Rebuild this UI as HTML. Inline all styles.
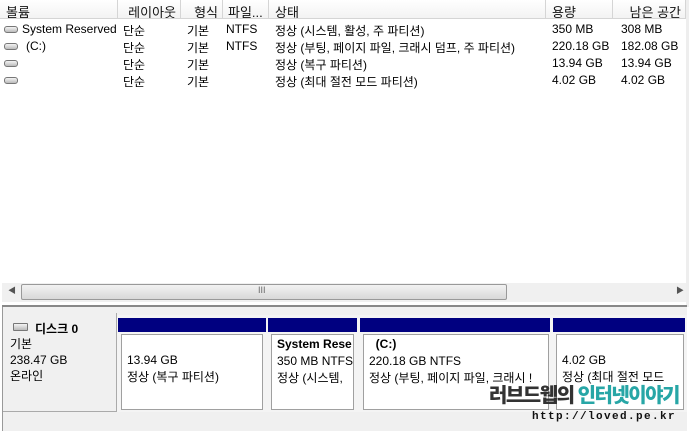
<!DOCTYPE html>
<html><head><meta charset="utf-8"><style>
*{margin:0;padding:0;box-sizing:border-box}
body{width:689px;height:431px;overflow:hidden;background:#fff;font-family:"Liberation Sans","Noto Sans CJK KR",sans-serif;font-size:12px;color:#000;position:relative}
.a{position:absolute;white-space:nowrap}
.hd{position:absolute;top:0;height:19px;border-right:1px solid #d5d5d5;border-bottom:1px solid #d5d5d5;background:linear-gradient(#fff,#f3f3f3);padding:2px 4px 0 6px;color:#111;font-size:13px;white-space:nowrap;overflow:hidden}
.ic{position:absolute;width:14px;height:7px;border:1px solid #777;border-radius:3px;background:linear-gradient(#f4f4f4,#bbb)}
.bar{position:absolute;top:318px;height:14px;background:#000080}
.box{position:absolute;top:334px;height:76px;background:#fff;border:1px solid #a0a0a0;padding:17px 0 0 5px;line-height:17px;overflow:hidden;white-space:nowrap}
</style></head><body>
<div class="hd" style="left:0;width:118px">볼륨</div>
<div class="hd" style="left:118px;width:63px;text-align:right">레이아웃</div>
<div class="hd" style="left:181px;width:42px;text-align:right">형식</div>
<div class="hd" style="left:223px;width:46px;padding-left:5px;padding-right:0">파일...</div>
<div class="hd" style="left:269px;width:277px">상태</div>
<div class="hd" style="left:546px;width:67px">용량</div>
<div class="hd" style="left:613px;width:73px;text-align:right">남은 공간</div>

<div class="ic" style="left:4px;top:26px"></div><div class="ic" style="left:4px;top:43px"></div><div class="ic" style="left:4px;top:60px"></div><div class="ic" style="left:4px;top:77px"></div>
<div class="a" style="left:22px;top:22px">System Reserved</div>
<div class="a" style="left:26px;top:39px">(C:)</div>
<div class="a" style="left:123px;top:22px">단순</div><div class="a" style="left:123px;top:39px">단순</div><div class="a" style="left:123px;top:56px">단순</div><div class="a" style="left:123px;top:73px">단순</div>
<div class="a" style="left:187px;top:22px">기본</div><div class="a" style="left:187px;top:39px">기본</div><div class="a" style="left:187px;top:56px">기본</div><div class="a" style="left:187px;top:73px">기본</div>
<div class="a" style="left:226px;top:22px">NTFS</div><div class="a" style="left:226px;top:39px">NTFS</div>
<div class="a" style="left:275px;top:22px">정상 (시스템, 활성, 주 파티션)</div>
<div class="a" style="left:275px;top:39px">정상 (부팅, 페이지 파일, 크래시 덤프, 주 파티션)</div>
<div class="a" style="left:275px;top:56px">정상 (복구 파티션)</div>
<div class="a" style="left:275px;top:73px">정상 (최대 절전 모드 파티션)</div>
<div class="a" style="left:552px;top:22px">350 MB</div><div class="a" style="left:552px;top:39px">220.18 GB</div><div class="a" style="left:552px;top:56px">13.94 GB</div><div class="a" style="left:552px;top:73px">4.02 GB</div>
<div class="a" style="left:621px;top:22px">308 MB</div><div class="a" style="left:621px;top:39px">182.08 GB</div><div class="a" style="left:621px;top:56px">13.94 GB</div><div class="a" style="left:621px;top:73px">4.02 GB</div>
<div style="position:absolute;left:686px;top:0;width:3px;height:307px;background:#eee"></div>

<div style="position:absolute;left:2px;top:283px;width:684px;height:19px;background:#f0f0f0"></div>
<div class="a" style="left:8px;top:285px;font-size:8px;color:#555">◀</div>
<div class="a" style="left:676px;top:285px;font-size:8px;color:#555">▶</div>
<div style="position:absolute;left:21px;top:284px;width:486px;height:16px;border:1px solid #999;border-radius:2px;background:linear-gradient(#f2f2f2,#d8d8d8)"></div>
<div class="a" style="left:258px;top:285px;font-size:9px;color:#666">III</div>
<div style="position:absolute;left:2px;top:305px;width:685px;height:2px;background:#888"></div>

<div style="position:absolute;left:2px;top:307px;width:685px;height:124px;background:#f0f0f0;border-left:1px solid #999"></div>
<div style="position:absolute;left:3px;top:313px;width:114px;height:99px;background:#f0f0f0;border-right:1px solid #aaa;border-bottom:1px solid #aaa"></div>
<div class="ic" style="left:13px;top:323px;width:15px;height:8px;border-radius:1px"></div>
<div class="a" style="left:35px;top:320px;font-weight:bold">디스크 0</div>
<div class="a" style="left:10px;top:336px;line-height:16px">기본<br>238.47 GB<br>온라인</div>
<div style="position:absolute;left:117px;top:411px;width:570px;height:1px;background:#bbb"></div>
<div style="position:absolute;left:117px;top:315px;width:570px;height:97px;background:#f4f4f4"></div>
<div class="bar" style="left:118px;width:148px"></div>
<div class="bar" style="left:268px;width:89px"></div>
<div class="bar" style="left:360px;width:190px"></div>
<div class="bar" style="left:553px;width:132px"></div>
<div class="box" style="left:121px;width:142px">13.94 GB<br>정상 (복구 파티션)</div>
<div class="box" style="left:271px;width:83px;padding-top:1px"><b>System Rese</b><br>350 MB NTFS<br>정상 (시스템,</div>
<div class="box" style="left:363px;width:186px;padding-top:1px"><b>&nbsp; (C:)</b><br>220.18 GB NTFS<br>정상 (부팅, 페이지 파일, 크래시 !</div>
<div class="box" style="left:556px;width:128px">4.02 GB<br>정상 (최대 절전 모드</div>

<div class="a" style="left:489px;top:383px;font-size:20px;font-weight:900;color:#333;letter-spacing:-1.5px;line-height:26px">러브드웹의 <span style="color:#27a6a6">인터넷이야기</span></div>
<div class="a" style="left:532px;top:411px;font-family:'Liberation Mono',monospace;font-weight:bold;font-size:11px;color:#111;letter-spacing:1.4px">http://loved.pe.kr</div>
</body></html>
